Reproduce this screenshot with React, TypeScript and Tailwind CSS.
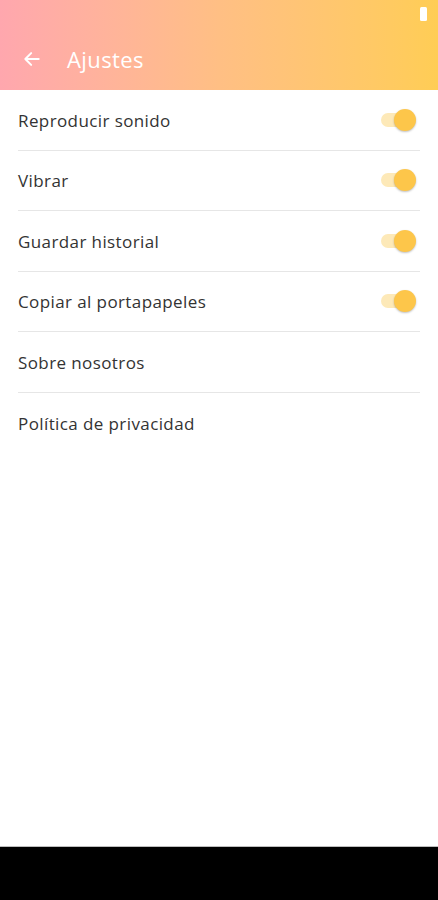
import React from "react";

const rows = [
  { label: "Reproducir sonido", toggle: true },
  { label: "Vibrar", toggle: true },
  { label: "Guardar historial", toggle: true },
  { label: "Copiar al portapapeles", toggle: true },
  { label: "Sobre nosotros", toggle: false },
  { label: "Política de privacidad", toggle: false },
];

function Toggle() {
  return (
    <div className="relative w-[35px] h-[20px] mr-[4px] flex items-center">
      <div className="w-[32px] h-[14px] rounded-full bg-[#fde9b8]" />
      <div className="absolute right-0 top-1/2 -translate-y-1/2 w-[22px] h-[22px] rounded-full bg-[#fdc64a] shadow-[0_1px_2px_rgba(0,0,0,0.25)]" />
    </div>
  );
}

export default function App() {
  return (
    <div
      className="w-[438px] h-[900px] flex flex-col bg-white overflow-hidden"
      style={{ fontFamily: '"Open Sans", "Noto Sans", sans-serif' }}
    >
      <header className="h-[90px] bg-gradient-to-r from-[#ffa7ae] via-[#ffbf84] to-[#ffcd55] flex flex-col">
        <div className="h-[30px] flex items-center justify-end pr-[11px]">
          <div className="w-[7px] h-[14px] rounded-[1.5px] bg-white mt-[-2px]" />
        </div>
        <div className="flex-1 flex items-center pl-[22px] pb-[2px]">
          <svg width="20" height="20" viewBox="0 0 24 24" fill="none" stroke="white" strokeWidth="2.4" strokeLinecap="round" strokeLinejoin="round">
            <path d="M20 12H5" />
            <path d="M11 5l-7 7 7 7" />
          </svg>
          <span className="ml-[25px] text-white text-[22px] tracking-[0.4px]">Ajustes</span>
        </div>
      </header>
      <main className="flex-1 flex flex-col">
        {rows.map((r, i) => (
          <div key={r.label} className="px-[18px]">
            <div
              className={
                "h-[60.5px] flex items-center justify-between " +
                (i < rows.length - 1 ? "border-b border-[#e6e6e6]" : "")
              }
            >
              <span className="text-[17px] tracking-[0.4px] text-[#333333] pt-[1px]">{r.label}</span>
              {r.toggle && <Toggle />}
            </div>
          </div>
        ))}
      </main>
      <div className="h-[1px] bg-[#bdbdbd]" />
      <div className="h-[53px] bg-black" />
    </div>
  );
}
